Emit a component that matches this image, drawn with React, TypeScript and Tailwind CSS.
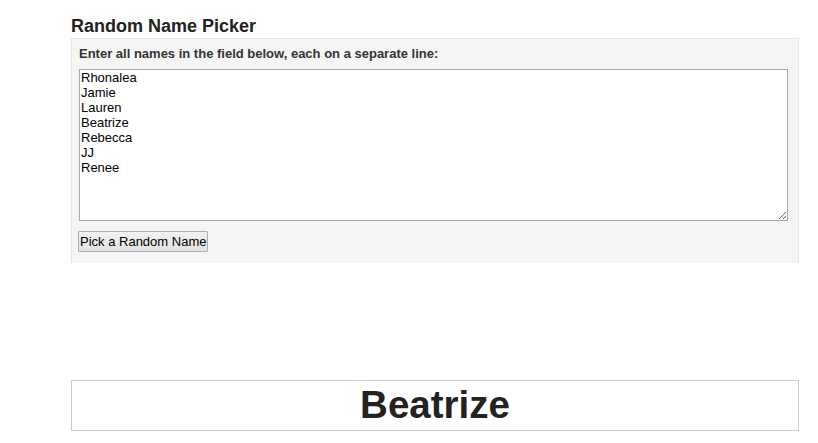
import { useState } from 'react'

const NAMES = ['Rhonalea', 'Jamie', 'Lauren', 'Beatrize', 'Rebecca', 'JJ', 'Renee']

export default function App() {
  const [text, setText] = useState(NAMES.join('\n'))
  const [picked, setPicked] = useState('Beatrize')

  const pick = () => {
    const list = text.split('\n').map((s) => s.trim()).filter(Boolean)
    if (list.length) setPicked(list[Math.floor(Math.random() * list.length)])
  }

  return (
    <div className="min-h-[443px] bg-white font-['Liberation_Sans',Arial,sans-serif] text-[#222]">
      <div className="ml-[71px] w-[728px] pt-[16px]">
        <h1 className="h-[22px] text-[18px] font-bold leading-[20px]">Random Name Picker</h1>

        {/* Input panel */}
        <div className="h-[225px] border border-[#e5e5e5] border-b-0 bg-[#f5f5f5] px-[7px] pt-[7px]">
          <p className="text-[13px] font-bold leading-[15px] text-[#333]">
            Enter all names in the field below, each on a separate line:
          </p>
          <textarea
            value={text}
            onChange={(e) => setText(e.target.value)}
            className="mt-[8px] block h-[152px] w-[709px] resize border border-[#a9a9a9] bg-white px-[1px] pt-0 pb-[1px] text-[13px] leading-[15px] text-black outline-none"
            spellCheck={false}
          />
          <button
            onClick={pick}
            className="-ml-[1px] mt-[10px] h-[21px] whitespace-nowrap rounded-[1px] border border-[#adadad] bg-gradient-to-b from-[#f2f2f2] to-[#e2e2e2] px-[1px] text-[13px] leading-[15px] text-black"
          >
            Pick a Random Name
          </button>
        </div>

        {/* Result */}
        <div className="mt-[117px] flex h-[51px] items-center justify-center border border-[#cccccc]">
          <span className="text-[38.5px] font-bold leading-none text-[#222]">{picked}</span>
        </div>
      </div>
    </div>
  )
}
